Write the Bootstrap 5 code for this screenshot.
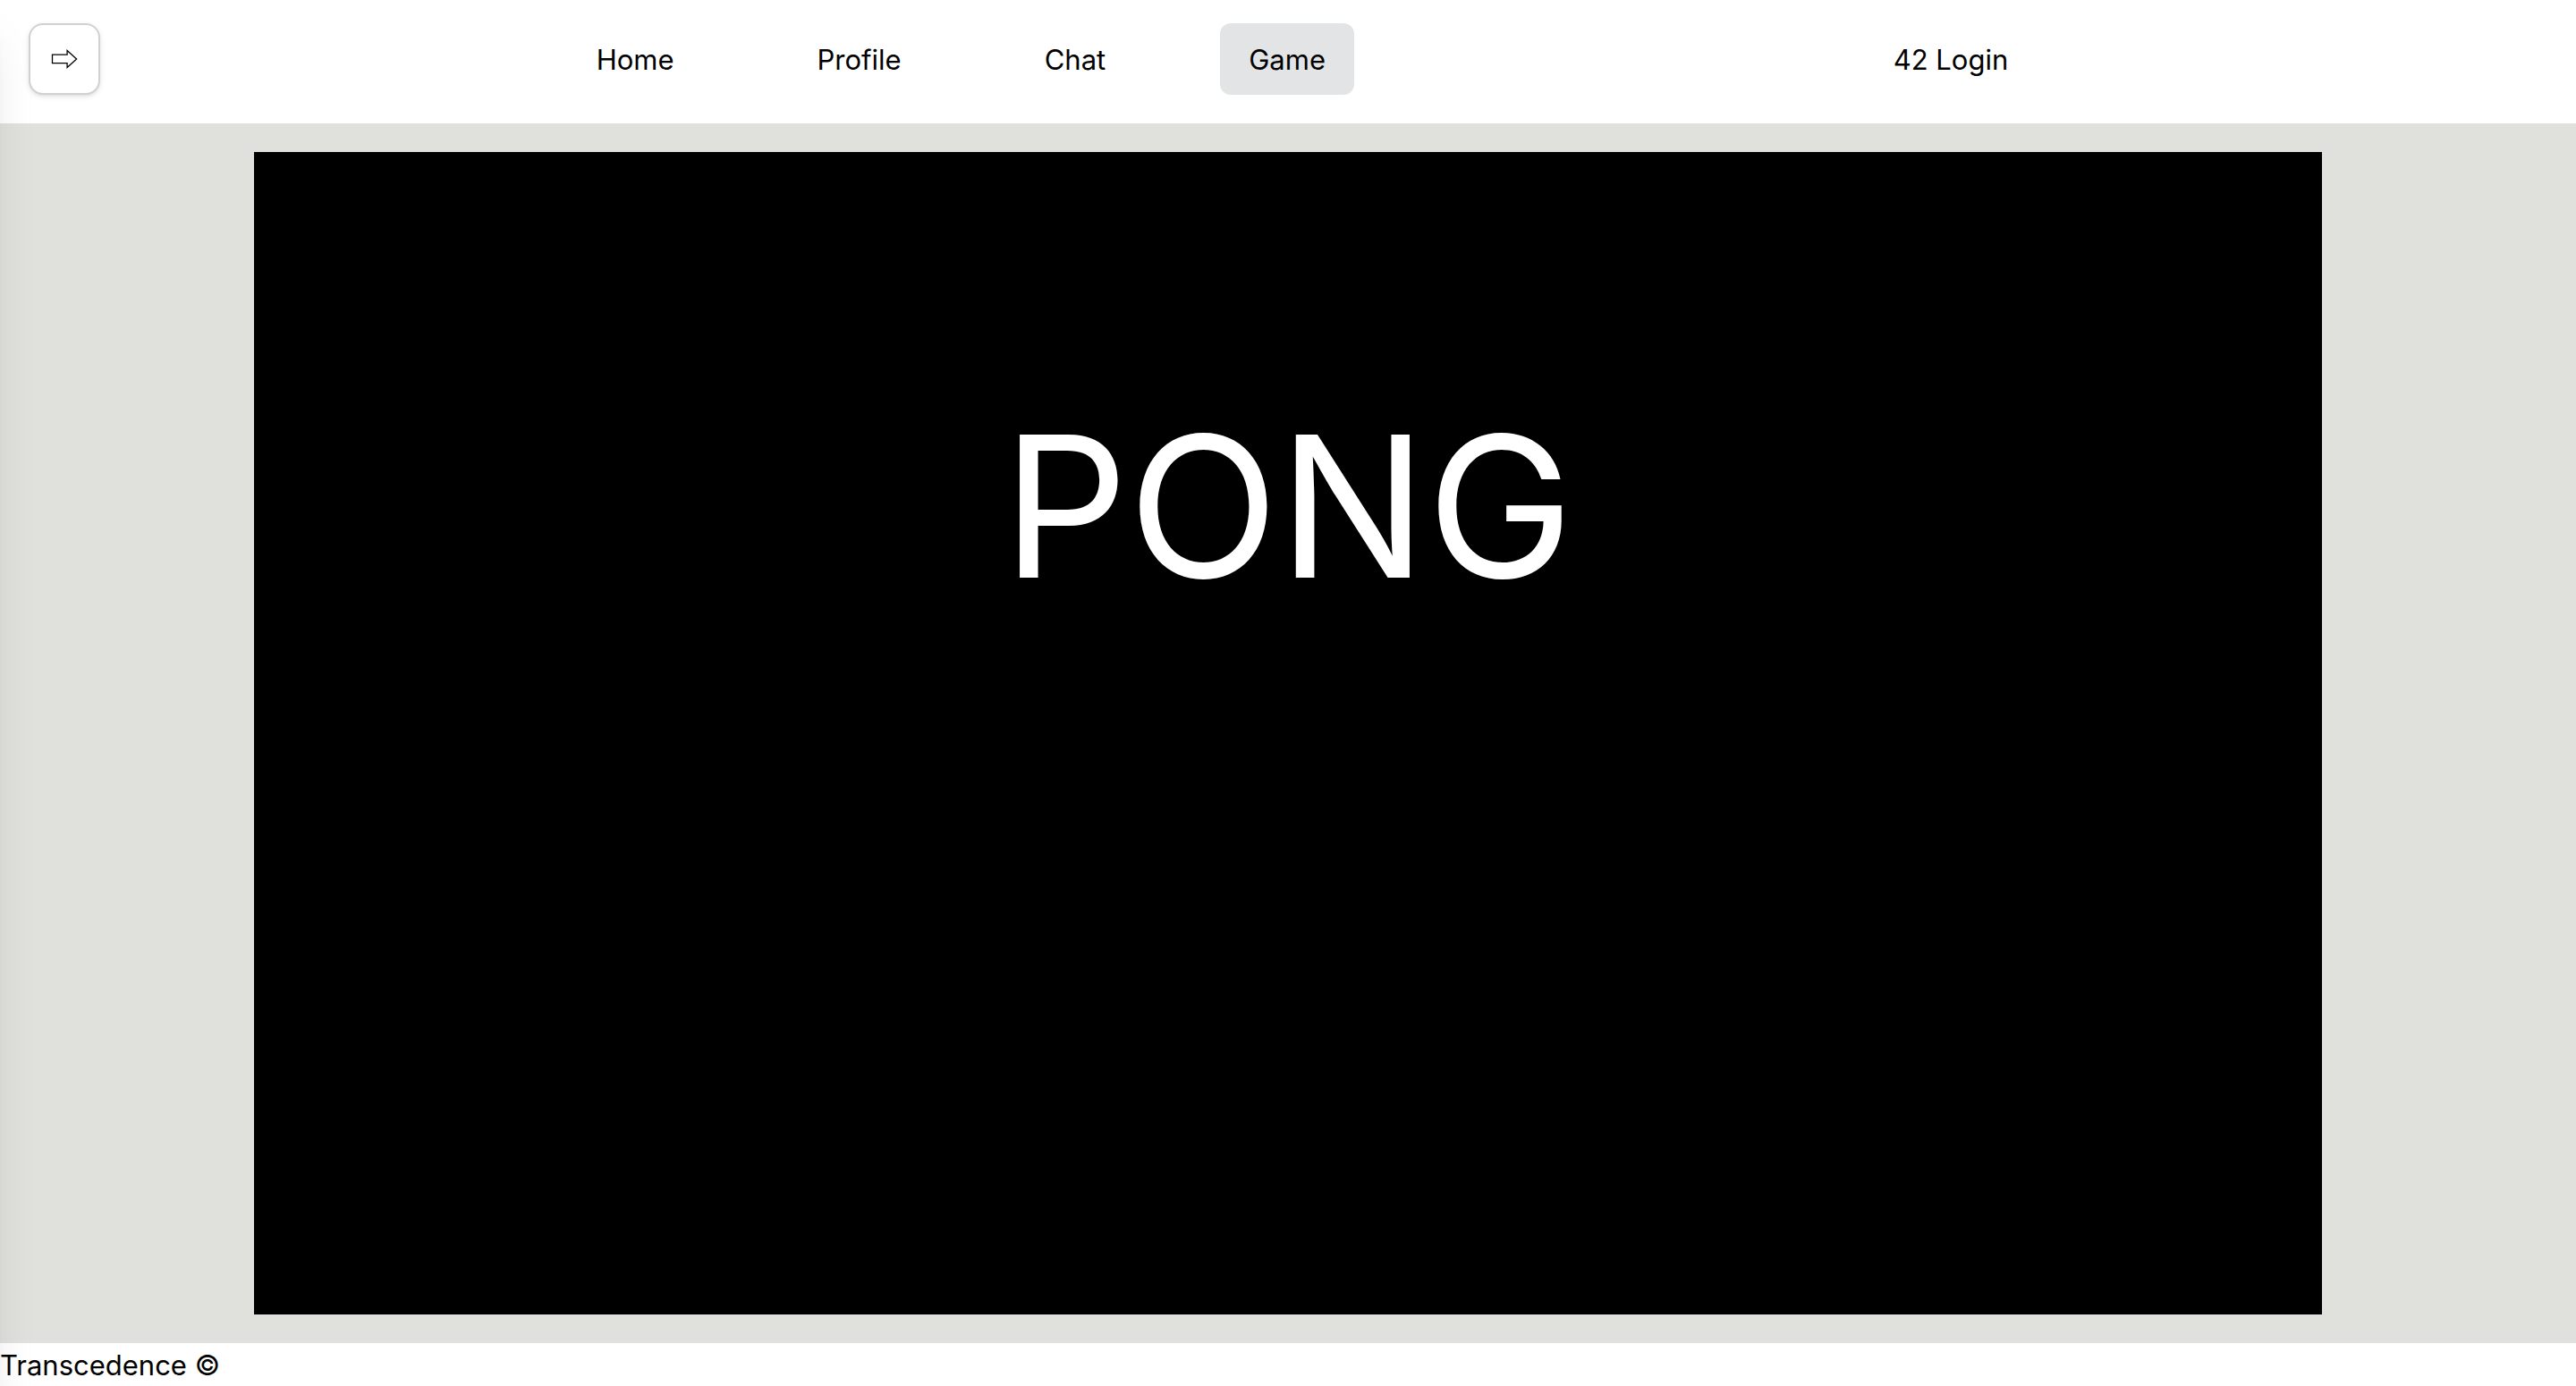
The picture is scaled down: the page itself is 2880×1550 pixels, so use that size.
<!DOCTYPE html>
<html lang="en">
<head>
<meta charset="utf-8">
<meta name="viewport" content="width=device-width, initial-scale=1">
<title>Transcedence</title>
<link href="https://cdn.jsdelivr.net/npm/bootstrap@5.3.0/dist/css/bootstrap.min.css" rel="stylesheet">
<style>
  body { font-family: Inter, "Liberation Sans", sans-serif; font-size: 31px; line-height: 46px; color: #000; }
  .site-header { padding: 26px 32px 32px; }
  .menu-toggle { width: 80px; height: 80px; border: 2px solid #d1d1d1; border-radius: 16px; background: #fff; box-shadow: 0 2px 6px rgba(0,0,0,.1), 0 2px 4px -2px rgba(0,0,0,.1); }
  .menu-toggle svg { width: 32px; height: 24px; }
  .site-nav { margin-left: -48px; }
  .site-links { gap: 96px; }
  .site-link { --bs-nav-link-color: #000; --bs-nav-link-hover-color: #000; font-size: 31px; padding: 18px 32px 16px; border-radius: 12px; color: #000; }
  .site-link.active { background: #e2e4e6; }
  .site-main { background: #e0e1dc; padding: 32px; }
  .game-board { background: #000; aspect-ratio: 16 / 9; padding-top: 284px; }
  .game-title { font-size: 220px; line-height: 224px; font-weight: 400; color: #fff; }
  .site-footer { padding-top: 2px; }
  .side-drawer { width: 400px; left: -400px; box-shadow: 0 40px 50px -10px rgba(0,0,0,.1), 0 16px 20px -12px rgba(0,0,0,.1); pointer-events: none; }
</style>
<script src="https://cdn.jsdelivr.net/npm/bootstrap@5.3.0/dist/js/bootstrap.bundle.min.js"></script>
</head>
<body class="bg-white">
<div class="d-flex flex-column vh-100 overflow-hidden">
  <header class="site-header d-flex align-items-center">
    <button type="button" class="menu-toggle d-flex align-items-center justify-content-center flex-shrink-0 p-0 position-relative z-3" aria-label="Open menu">
      <svg viewBox="0 0 32 24" fill="none" stroke="#000" stroke-width="1.3" aria-hidden="true"><path d="M2.5 7.2h16.6V2.4L29.6 12 19.1 21.6v-4.9H2.5z"/></svg>
    </button>
    <nav class="site-nav d-flex flex-grow-1 justify-content-evenly">
      <div class="site-links d-flex">
        <a class="site-link nav-link" href="#">Home</a>
        <a class="site-link nav-link" href="#">Profile</a>
        <a class="site-link nav-link" href="#">Chat</a>
        <a class="site-link nav-link active" href="#" aria-current="page">Game</a>
      </div>
      <a class="site-link nav-link" href="#">42 Login</a>
    </nav>
  </header>
  <main class="site-main d-flex flex-grow-1 justify-content-center">
    <section class="game-board h-100 text-center">
      <h1 class="game-title m-0">PONG</h1>
    </section>
  </main>
  <footer class="site-footer">Transcedence ©</footer>
</div>
<aside class="side-drawer position-fixed top-0 bottom-0" aria-hidden="true"></aside>
</body>
</html>
